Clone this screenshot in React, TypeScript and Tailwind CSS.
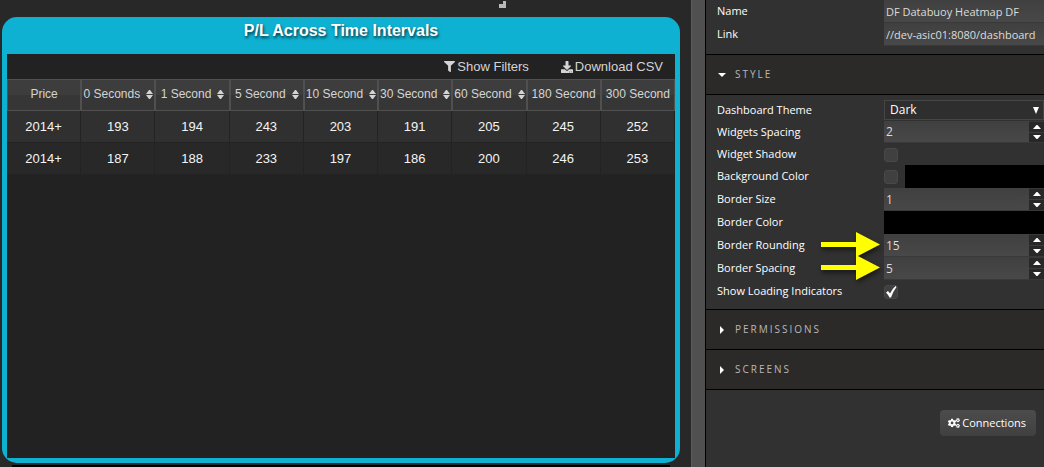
import { useState } from "react";
import type { ReactNode } from "react";
import { FaFilter, FaDownload, FaCogs } from "react-icons/fa";

const columns = [
  { label: "Price", sortable: false },
  { label: "0 Seconds", sortable: true },
  { label: "1 Second", sortable: true },
  { label: "5 Second", sortable: true },
  { label: "10 Second", sortable: true },
  { label: "30 Second", sortable: true },
  { label: "60 Second", sortable: true },
  { label: "180 Second", sortable: false },
  { label: "300 Second", sortable: false },
];

const rows = [
  ["2014+", "193", "194", "243", "203", "191", "205", "245", "252"],
  ["2014+", "187", "188", "233", "197", "186", "200", "246", "253"],
];

function HeatmapWidget() {
  return (
    <section className="mx-0.5 flex flex-1 flex-col rounded-[15px] bg-[#0fb1d2] px-[5px] pb-[5px]">
      <h1 className="h-[37px] pt-0.5 text-center text-base font-bold text-white [text-shadow:1px_2px_3px_rgba(0,0,0,0.7)]">
        P/L Across Time Intervals
      </h1>
      <div className="flex-1 bg-[#222222]">
        <div className="flex h-[25px] items-center justify-end gap-8 pr-3 text-[13px] text-[#d4d4d4]">
          <button className="flex items-center gap-0.5">
            <FaFilter size={11} /> Show Filters
          </button>
          <button className="flex items-center gap-0.5">
            <FaDownload size={12} /> Download CSV
          </button>
        </div>
        <table className="w-full table-fixed border-separate border-spacing-0 text-center">
          <thead>
            <tr>
              {columns.map((c) => (
                <th
                  key={c.label}
                  className="h-8 border border-[#505050] bg-linear-to-b from-[#3d3d3d] from-50% to-[#363636] to-50% p-0 pb-0.5 text-xs font-normal whitespace-nowrap text-[#d4d4d4]"
                >
                  {c.sortable ? (
                    <button className="inline-flex items-center gap-1.5">
                      {c.label}
                      <svg width="7" height="9" viewBox="0 0 7 9" fill="currentColor" aria-hidden="true">
                        <path d="M0 4L3 0H4L7 4ZM0 5L3 9H4L7 5Z" />
                      </svg>
                    </button>
                  ) : (
                    c.label
                  )}
                </th>
              ))}
            </tr>
          </thead>
          <tbody className="text-[13px] text-[#f4f4f4]">
            {rows.map((r, i) => (
              <tr key={i} className="odd:bg-[#303030] even:bg-[#282828]">
                {r.map((v, j) => (
                  <td key={j} className="h-8 border-r border-b border-[#232323] p-0">
                    {v}
                  </td>
                ))}
              </tr>
            ))}
          </tbody>
        </table>
      </div>
    </section>
  );
}

function Field({
  id,
  label,
  tall = false,
  arrow = false,
  children,
}: {
  id: string;
  label: string;
  tall?: boolean;
  arrow?: boolean;
  children: ReactNode;
}) {
  return (
    <div className={`relative flex items-center pl-[11px] ${tall ? "h-[23px]" : "h-[22px]"}`}>
      <label htmlFor={id} className="w-[167px] shrink-0 font-medium text-white">
        {label}
      </label>
      <div className="flex h-full min-w-0 flex-1 items-center">{children}</div>
      {arrow && (
        <svg
          viewBox="0 0 60 25"
          className="pointer-events-none absolute -top-0.5 left-[115px] h-[25px] w-[60px] overflow-visible drop-shadow-[1px_3px_2px_rgba(0,0,0,0.5)]"
          aria-hidden="true"
        >
          <path d="M0 10H35V0L59 12.5L35 25V15H0Z" fill="#ffff00" />
        </svg>
      )}
    </div>
  );
}

const inputClass =
  "h-full min-w-0 flex-1 border-b border-[#393939] bg-linear-to-b from-[#404040] to-[#484848] pl-0.5 font-medium text-[#dcdcdc] outline-none";

function NumberInput({ id, initial }: { id: string; initial: number }) {
  const [value, setValue] = useState(initial);
  return (
    <>
      <input
        id={id}
        type="number"
        value={value}
        onChange={(e) => setValue(Number(e.target.value))}
        className={`${inputClass} appearance-none text-xs [-moz-appearance:textfield] [&::-webkit-inner-spin-button]:appearance-none`}
      />
      <div className="flex h-full w-[15px] flex-col gap-px border-y border-[#383838] bg-[#3c3c3c]">
        <button
          aria-label="Increase"
          onClick={() => setValue(value + 1)}
          className="flex flex-1 items-center justify-center bg-[#282828]"
        >
          <svg width="8" height="4" viewBox="0 0 8 4">
            <path d="M0 4L3.500 0H4.500L8 4Z" fill="#fff" />
          </svg>
        </button>
        <button
          aria-label="Decrease"
          onClick={() => setValue(value - 1)}
          className="flex flex-1 items-center justify-center bg-[#282828]"
        >
          <svg width="8" height="4" viewBox="0 0 8 4">
            <path d="M0 0L3.500 4H4.500L8 0Z" fill="#fff" />
          </svg>
        </button>
      </div>
    </>
  );
}

function Checkbox({ id, initial = false }: { id: string; initial?: boolean }) {
  const [checked, setChecked] = useState(initial);
  return (
    <span className="grid shrink-0 place-items-center pt-px">
      <input
        id={id}
        type="checkbox"
        checked={checked}
        onChange={(e) => setChecked(e.target.checked)}
        className="col-start-1 row-start-1 size-3.5 appearance-none rounded-[3px] border border-[#484848] bg-[#404040]"
      />
      {checked && (
        <svg
          width="12"
          height="13"
          viewBox="0 0 12 13"
          className="pointer-events-none col-start-1 row-start-1"
        >
          <path d="M1 7.5L3 6L5 8.5Q7 4 10.5 1L11.5 2Q8 6.500 6 12.500H4.500Q3 9.500 1 7.500Z" fill="#fff" />
        </svg>
      )}
    </span>
  );
}

function SectionHeader({ title, open = false }: { title: string; open?: boolean }) {
  return (
    <button
      aria-expanded={open}
      className="flex h-10 w-full items-center border-t border-black bg-[#2c2a29] pl-3 text-left text-[10px] tracking-[2px] text-[#b8b8b8]"
    >
      <svg width="8" height="8" viewBox="0 0 8 8" className="mr-[9px]">
        <path d={open ? "M0 2H8L4 6Z" : "M2 0L6 4L2 8Z"} fill="#fff" />
      </svg>
      {title}
    </button>
  );
}

function Settings() {
  return (
    <aside className="w-[339px] shrink-0 border-l border-black bg-[#313131] font-['Open_Sans','Noto_Sans',sans-serif] text-[11px]">
      <div className="pb-2">
        <Field id="name" label="Name" tall>
          <input id="name" defaultValue="DF Databuoy Heatmap DF" className={inputClass} />
        </Field>
        <Field id="link" label="Link" tall>
          <input id="link" defaultValue="//dev-asic01:8080/dashboard" className={inputClass} />
        </Field>
      </div>
      <SectionHeader title="STYLE" open />
      <div className="border-t border-black pt-1 pb-[7px]">
        <Field id="theme" label="Dashboard Theme">
          <div className="grid h-full flex-1 items-center">
            <select
              id="theme"
              className="col-start-1 row-start-1 h-5 w-full appearance-none border border-[#464646] bg-[#2e2e2e] pl-[5px] text-xs text-white"
            >
              <option>Dark</option>
              <option>Light</option>
            </select>
            <svg
              width="8"
              height="7"
              viewBox="0 0 8 7"
              className="pointer-events-none col-start-1 row-start-1 mr-1 justify-self-end"
            >
              <path d="M1 0H7L4 7Z" fill="#fff" />
            </svg>
          </div>
        </Field>
        <Field id="widgets-spacing" label="Widgets Spacing">
          <NumberInput id="widgets-spacing" initial={2} />
        </Field>
        <Field id="widget-shadow" label="Widget Shadow">
          <Checkbox id="widget-shadow" />
        </Field>
        <Field id="background" label="Background Color" tall>
          <Checkbox id="background" />
          <button aria-label="Choose background color" className="ml-[7px] h-full flex-1 bg-black" />
        </Field>
        <Field id="border-size" label="Border Size" tall>
          <NumberInput id="border-size" initial={1} />
        </Field>
        <Field id="border-color" label="Border Color" tall>
          <button id="border-color" className="h-full flex-1 bg-black" />
        </Field>
        <Field id="rounding" label="Border Rounding" tall arrow>
          <NumberInput id="rounding" initial={15} />
        </Field>
        <Field id="spacing" label="Border Spacing" tall arrow>
          <NumberInput id="spacing" initial={5} />
        </Field>
        <Field id="indicators" label="Show Loading Indicators">
          <Checkbox id="indicators" initial />
        </Field>
      </div>
      <SectionHeader title="PERMISSIONS" />
      <SectionHeader title="SCREENS" />
      <div className="flex justify-end border-t border-black pt-5 pr-2">
        <button className="flex h-[26px] items-center gap-0.5 rounded bg-linear-to-b from-[#4c4c4c] to-[#404040] px-2 pr-2.5 font-medium text-white">
          <FaCogs size={12} /> Connections
        </button>
      </div>
    </aside>
  );
}

export default function App() {
  return (
    <div className="flex min-h-screen overflow-hidden bg-[#282828] font-['Liberation_Sans',Arial,sans-serif]">
      <main className="flex min-w-0 flex-1 flex-col pr-[9px]">
        <div className="flex h-[17px] justify-end pr-[175px]">
          <svg width="8" height="8" viewBox="0 0 8 8" aria-hidden="true">
            <path d="M0 4H4V1H7V8H0Z" fill="#b8b8b8" />
          </svg>
        </div>
        <HeatmapWidget />
        <div className="mx-3 mt-0.5 h-0.5 bg-black" />
      </main>
      <div className="w-3.5 shrink-0 border-l border-[#5c5c5c] bg-[#505050]" />
      <Settings />
    </div>
  );
}
